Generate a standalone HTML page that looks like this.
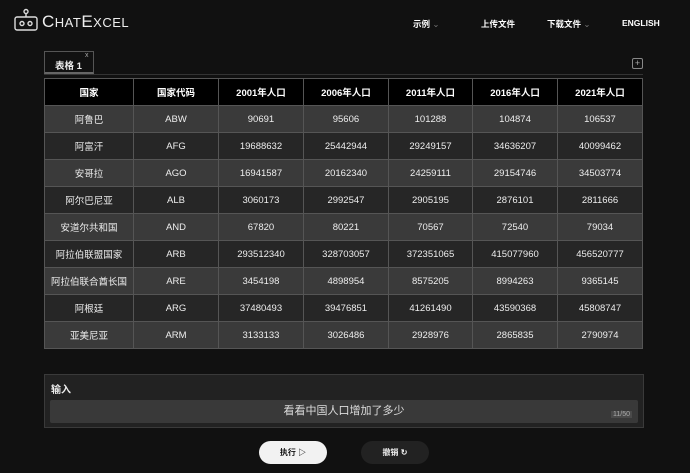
<!DOCTYPE html><html><head><meta charset="utf-8"><style>
*{margin:0;padding:0;box-sizing:border-box}
body{width:690px;height:473px;background:#111;color:#eee;font-family:"Liberation Sans","Noto Sans CJK SC",sans-serif;position:relative;overflow:hidden}
.a{position:absolute}
.nav{font-size:8.5px;font-weight:bold;color:#fff}
table{position:absolute;left:44px;top:78px;border-collapse:collapse;width:599px;font-size:9.5px}
td,th{border:1px solid #555;text-align:center;height:27px;color:#eee}
th{background:#000;font-weight:bold;color:#fff;font-size:9.5px}
tr:nth-child(even) td{background:#3a3a3a}
tr:nth-child(odd) td{background:#262626}
</style></head><body>
<svg class="a" style="left:14px;top:8px" width="24" height="24" viewBox="0 0 24 24" fill="none" stroke="#ddd" stroke-width="1.4"><circle cx="12" cy="3.5" r="2"/><line x1="12" y1="5.5" x2="12" y2="9"/><rect x="1" y="9" width="22" height="13" rx="2"/><circle cx="8" cy="15.5" r="2"/><circle cx="16" cy="15.5" r="2"/></svg>
<div class="a" style="left:42px;top:12px;font-size:17px;color:#eee;letter-spacing:0.5px">C<span style="font-size:13px">HAT</span>E<span style="font-size:13px">XCEL</span></div>
<div class="a nav" style="left:413px;top:18px">示例 <span style="color:#777;font-weight:normal">⌄</span></div>
<div class="a nav" style="left:481px;top:18px">上传文件</div>
<div class="a nav" style="left:547px;top:18px">下载文件 <span style="color:#777;font-weight:normal">⌄</span></div>
<div class="a nav" style="left:622px;top:18px">ENGLISH</div>
<div class="a" style="left:44px;top:51px;width:50px;height:23px;border:1px solid #555;border-bottom:2px solid #666;background:#111;font-size:9.5px;font-weight:bold;padding:6px 0 0 10px">表格 1<span class="a" style="left:40px;top:0;font-size:7px;color:#aaa;font-weight:normal">x</span></div>
<div class="a" style="left:44px;top:74px;width:599px;height:1px;background:#333"></div>
<div class="a" style="left:632px;top:58px;width:11px;height:11px;border:1px solid #888;border-radius:2px;font-size:9px;line-height:9px;text-align:center;color:#aaa">+</div>
<table>
<tr><th style="width:89px">国家</th><th style="width:85px">国家代码</th><th>2001年人口</th><th>2006年人口</th><th>2011年人口</th><th>2016年人口</th><th>2021年人口</th></tr>
<tr><td>阿鲁巴</td><td>ABW</td><td>90691</td><td>95606</td><td>101288</td><td>104874</td><td>106537</td></tr>
<tr><td>阿富汗</td><td>AFG</td><td>19688632</td><td>25442944</td><td>29249157</td><td>34636207</td><td>40099462</td></tr>
<tr><td>安哥拉</td><td>AGO</td><td>16941587</td><td>20162340</td><td>24259111</td><td>29154746</td><td>34503774</td></tr>
<tr><td>阿尔巴尼亚</td><td>ALB</td><td>3060173</td><td>2992547</td><td>2905195</td><td>2876101</td><td>2811666</td></tr>
<tr><td>安道尔共和国</td><td>AND</td><td>67820</td><td>80221</td><td>70567</td><td>72540</td><td>79034</td></tr>
<tr><td>阿拉伯联盟国家</td><td>ARB</td><td>293512340</td><td>328703057</td><td>372351065</td><td>415077960</td><td>456520777</td></tr>
<tr><td>阿拉伯联合酋长国</td><td>ARE</td><td>3454198</td><td>4898954</td><td>8575205</td><td>8994263</td><td>9365145</td></tr>
<tr><td>阿根廷</td><td>ARG</td><td>37480493</td><td>39476851</td><td>41261490</td><td>43590368</td><td>45808747</td></tr>
<tr><td>亚美尼亚</td><td>ARM</td><td>3133133</td><td>3026486</td><td>2928976</td><td>2865835</td><td>2790974</td></tr>
</table>
<div class="a" style="left:44px;top:374px;width:600px;height:54px;background:#222;border:1px solid #3a3a3a"></div>
<div class="a" style="left:51px;top:381px;font-size:10px;font-weight:bold">输入</div>
<div class="a" style="left:50px;top:400px;width:588px;height:23px;background:#393939;border-radius:2px;text-align:center;font-size:11px;line-height:22px;color:#ddd">看看中国人口增加了多少</div>
<div class="a" style="left:611px;top:411px;font-size:7px;color:#aaa;background:#4a4a4a;padding:0 2px">11/50</div>
<div class="a" style="left:259px;top:441px;width:68px;height:23px;background:#f2f2f2;border-radius:12px;color:#111;font-size:8px;font-weight:bold;text-align:center;line-height:23px">执行 ▷</div>
<div class="a" style="left:361px;top:441px;width:68px;height:23px;background:#222;border-radius:12px;color:#eee;font-size:8px;font-weight:bold;text-align:center;line-height:23px">撤销 ↻</div>
</body></html>
